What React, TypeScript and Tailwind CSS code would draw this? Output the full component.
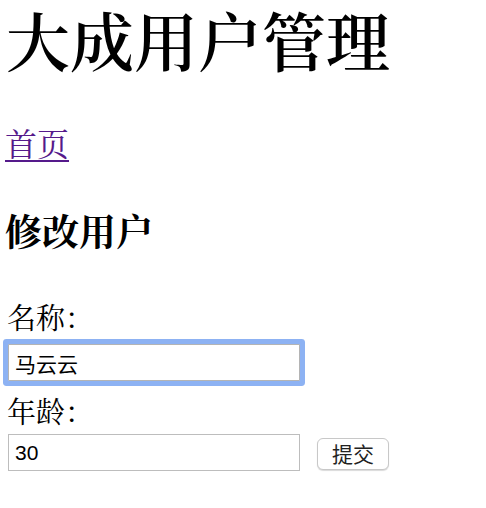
import React from "react";

const serif = "font-['Noto_Serif_CJK_SC','Liberation_Serif','Noto_Sans_CJK_SC',serif]";
const sans = "font-['Liberation_Sans','Noto_Sans_CJK_SC',sans-serif]";

export default function App() {
  return (
    <div className={`min-h-screen bg-white px-2 text-black ${serif}`}>
      <h1 className="m-0 -ml-[2px] text-[64px] font-semibold leading-[76px]">大成用户管理</h1>

      <p className="mt-[46px] -ml-[3px] text-[32px] leading-[40px]">
        <a href="#" className="text-[#551a8b] underline decoration-[2px] underline-offset-[4px]">
          首页
        </a>
      </p>

      <h2 className="mt-[46px] -ml-[3px] text-[37px] font-bold leading-[44px]">修改用户</h2>

      <form className="mt-[47px] flex flex-col" onSubmit={(e) => e.preventDefault()}>
        <label className="-ml-[1px] text-[29px] leading-[36px]">名称：</label>
        <input
          defaultValue="马云云"
          className={`mt-[9px] h-[37px] w-[292px] rounded-[1px] border border-[#b4b4b4] bg-white pl-[6px] text-[21px] text-black shadow-[0_0_0_5px_#8db2f3] outline-none ${sans}`}
        />

        <label className="mt-[12px] -ml-[1px] text-[29px] leading-[36px]">年龄：</label>
        <div className="mt-[5px] flex items-start gap-[17px]">
          <input
            defaultValue="30"
            className={`h-[37px] w-[292px] border border-[#bdbdbd] bg-white pl-[6px] text-[21px] text-black outline-none ${sans}`}
          />
          <button
            type="submit"
            className={`mt-[4px] h-[32px] w-[72px] rounded-[6px] border border-[#c8c8c8] bg-white text-[21px] text-[#222] shadow-[0_1px_1px_rgba(0,0,0,0.15)] ${sans}`}
          >
            提交
          </button>
        </div>
      </form>
    </div>
  );
}
